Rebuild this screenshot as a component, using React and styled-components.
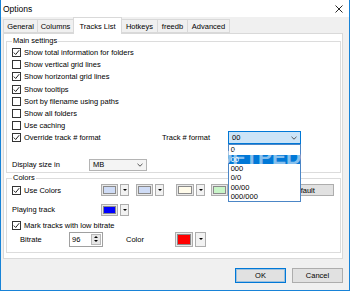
import React from "react";
import styled, { createGlobalStyle } from "styled-components";

const GlobalStyle = createGlobalStyle`
  html, body {
    margin: 0;
    padding: 0;
    background: #fff;
  }
  body {
    font-family: "Liberation Sans", Arial, sans-serif;
    font-size: 7.5px;
    color: #000;
  }
`;

const Window = styled.div`
  position: relative;
  width: 350px;
  height: 291px;
  box-sizing: border-box;
  border: 1px solid #1883d7;
  border-top: none;
  display: flex;
  flex-direction: column;
  background: #f0f0f0;
  overflow: hidden;
`;

const TitleBar = styled.div`
  flex: 0 0 17px;
  background: #fff;
  display: flex;
  align-items: center;
  justify-content: space-between;
  padding: 0 6px 0 2px;
  font-size: 8.5px;
`;

const TabStrip = styled.div`
  flex: 0 0 16px;
  display: flex;
  align-items: flex-end;
  padding-left: 2px;
`;

const Tab = styled.div`
  position: relative;
  box-sizing: border-box;
  width: ${(p) => p.$w}px;
  height: ${(p) => (p.$active ? 17 : 14)}px;
  margin-left: ${(p) => (p.$first ? 0 : -1)}px;
  margin-bottom: ${(p) => (p.$active ? -1 : 0)}px;
  z-index: ${(p) => (p.$active ? 2 : 1)};
  border: 1px solid #d9d9d9;
  border-bottom: ${(p) => (p.$active ? "none" : "1px solid #d9d9d9")};
  background: ${(p) => (p.$active ? "#fff" : "#f0f0f0")};
  display: flex;
  align-items: center;
  justify-content: center;
`;

const Page = styled.div`
  margin: 0 6px 0 2px;
  border: 1px solid #d9d9d9;
  background: #fff;
  padding: 2px 1px 5.5px 2px;
`;

const Group = styled.fieldset`
  margin: 0;
  min-width: 0;
  border: 1px solid #dcdcdc;
  padding: 0.5px 0 ${(p) => p.$pb}px 5px;
`;

const Legend = styled.legend`
  margin-left: 0;
  padding: 0 1px;
  line-height: 10px;
  font-size: 7.5px;
`;

const Row = styled.div`
  display: flex;
  align-items: center;
  height: ${(p) => p.$h || 12.2}px;
  margin-top: ${(p) => p.$mt || 0}px;
  padding-left: ${(p) => p.$pl || 0}px;
  padding-right: ${(p) => p.$pr || 0}px;
`;

const CheckItem = styled.label`
  flex: none;
  display: flex;
  align-items: center;
  gap: 3px;
  width: ${(p) => (p.$w ? `${p.$w}px` : "auto")};
`;

const Box = styled.span`
  flex: none;
  width: 9px;
  height: 9px;
  box-sizing: border-box;
  border: 1px solid #333;
  background: #fff;
  display: flex;
`;

const Text = styled.span`
  flex: none;
  width: ${(p) => (p.$w ? `${p.$w}px` : "auto")};
  margin-left: ${(p) => p.$ml || 0}px;
  white-space: nowrap;
`;

const ComboWrap = styled.div`
  position: relative;
  flex: none;
`;

const Combo = styled.div`
  box-sizing: border-box;
  width: ${(p) => p.$w}px;
  height: ${(p) => p.$h}px;
  border: 1px solid ${(p) => (p.$open ? "#0078d7" : "#b4b4b4")};
  background: ${(p) => (p.$open ? "#cce4f7" : "#f4f4f4")};
  display: flex;
  align-items: center;
  justify-content: space-between;
  padding: 0 3px;
`;

const DropList = styled.div`
  position: absolute;
  top: 100%;
  left: 0;
  width: 100%;
  box-sizing: border-box;
  border: 1px solid #4c86c6;
  background: #fff;
  padding: 0;
  z-index: 5;
`;

const Option = styled.div`
  height: 9.3px;
  line-height: 9.3px;
  padding-left: 1.7px;
  background: ${(p) => (p.$sel ? "#0078d7" : "transparent")};
  color: ${(p) => (p.$sel ? "#fff" : "#000")};
`;

const Picker = styled.div`
  flex: none;
  display: flex;
  gap: 2px;
  margin-left: ${(p) => p.$ml || 0}px;
`;

const SwatchBtn = styled.span`
  box-sizing: border-box;
  width: ${(p) => p.$w}px;
  height: ${(p) => p.$h}px;
  border: 1px solid #adadad;
  background: #e8e8e8;
  padding: 1px;
  display: flex;
`;

const Swatch = styled.span`
  flex: 1;
  box-sizing: border-box;
  border: 1px solid #8a8a8a;
  background: ${(p) => p.$c};
`;

const ArrowBtn = styled.span`
  box-sizing: border-box;
  width: ${(p) => p.$w}px;
  height: ${(p) => p.$h}px;
  border: 1px solid #adadad;
  background: #f2f2f2;
  display: flex;
  align-items: center;
  justify-content: center;
`;

const Tri = styled.span`
  width: 0;
  height: 0;
  border-left: 2px solid transparent;
  border-right: 2px solid transparent;
  border-${(p) => (p.$up ? "bottom" : "top")}: 2px solid #000;
`;

const Button = styled.div`
  flex: none;
  box-sizing: border-box;
  width: ${(p) => p.$w}px;
  height: ${(p) => p.$h}px;
  margin-left: ${(p) => (p.$auto ? "auto" : "0")};
  border: 1px solid ${(p) => (p.$default ? "#0078d7" : "#adadad")};
  box-shadow: ${(p) => (p.$default ? "inset 0 0 0 1px rgba(0,120,215,0.3)" : "none")};
  background: #e1e1e1;
  display: flex;
  align-items: center;
  justify-content: center;
`;

const Spin = styled.div`
  flex: none;
  box-sizing: border-box;
  width: 34px;
  height: 15px;
  border: 1px solid #a0a0a0;
  background: #fff;
  display: flex;
  align-items: center;
  justify-content: space-between;
  padding: 0 1px 0 2px;
`;

const SpinBtns = styled.span`
  box-sizing: border-box;
  width: 10px;
  height: 11px;
  border: 1px solid #b8b8b8;
  background: #e6e6e6;
  display: flex;
  flex-direction: column;
  align-items: center;
  justify-content: center;
  gap: 1.5px;
`;

const Footer = styled.div`
  flex: 1;
  display: flex;
  justify-content: flex-end;
  align-items: flex-start;
  gap: 6px;
  padding: 9px 6px 0 0;
`;

const Watermark = styled.div`
  position: absolute;
  left: 201px;
  top: 145px;
  font-size: 21px;
  font-weight: bold;
  color: rgba(255, 255, 255, 0.55);
  pointer-events: none;
  z-index: 10;
  white-space: nowrap;
`;

const Chevron = () => (
  <svg width="6" height="4" viewBox="0 0 6 4">
    <polyline points="0.5,0.8 3,3.2 5.5,0.8" fill="none" stroke="#444" strokeWidth="0.9" />
  </svg>
);

const Check = ({ on, label, w }) => (
  <CheckItem $w={w}>
    <Box>
      {on && (
        <svg width="7" height="7" viewBox="0 0 7 7">
          <polyline points="0.8,3.6 2.7,5.5 6.2,1.2" fill="none" stroke="#222" strokeWidth="1" />
        </svg>
      )}
    </Box>
    <Text>{label}</Text>
  </CheckItem>
);

const ColorPicker = ({ color, ml, w = 17, aw = 9, h = 12 }) => (
  <Picker $ml={ml}>
    <SwatchBtn $w={w} $h={h}>
      <Swatch $c={color} />
    </SwatchBtn>
    <ArrowBtn $w={aw} $h={h}>
      <Tri />
    </ArrowBtn>
  </Picker>
);

const tabs = [
  { label: "General", w: 35 },
  { label: "Columns", w: 37 },
  { label: "Tracks List", w: 49, active: true },
  { label: "Hotkeys", w: 37 },
  { label: "freedb", w: 31 },
  { label: "Advanced", w: 43 },
];

const mainChecks = [
  { label: "Show total information for folders", on: true },
  { label: "Show vertical grid lines", on: false },
  { label: "Show horizontal grid lines", on: true },
  { label: "Show tooltips", on: true },
  { label: "Sort by filename using paths", on: false },
  { label: "Show all folders", on: false },
  { label: "Use caching", on: false },
];

const formats = ["0", "00", "000", "0/0", "00/00", "000/000"];

export default function App() {
  return (
    <>
      <GlobalStyle />
      <Window>
        <TitleBar>
          <span>Options</span>
          <svg width="8" height="8" viewBox="0 0 8 8">
            <path d="M0.5 0.5 L7.5 7.5 M7.5 0.5 L0.5 7.5" stroke="#111" strokeWidth="0.9" />
          </svg>
        </TitleBar>
        <TabStrip>
          {tabs.map((t, i) => (
            <Tab key={t.label} $w={t.w} $active={t.active} $first={i === 0}>
              {t.label}
            </Tab>
          ))}
        </TabStrip>
        <Page>
          <Group $pb={1}>
            <Legend>Main settings</Legend>
            {mainChecks.map((c) => (
              <Row key={c.label}>
                <Check on={c.on} label={c.label} />
              </Row>
            ))}
            <Row>
              <Check on label="Override track # format" w={150} />
              <Text $w={66}>Track # format</Text>
              <ComboWrap>
                <Combo $w={73} $h={13} $open>
                  <span>00</span>
                  <Chevron />
                </Combo>
                <DropList>
                  {formats.map((f) => (
                    <Option key={f} $sel={f === "00"}>
                      {f}
                    </Option>
                  ))}
                </DropList>
              </ComboWrap>
            </Row>
            <Row $mt={14.5} $h={12.5}>
              <Text $w={77}>Display size in</Text>
              <Combo $w={58} $h={12.5}>
                <span>MB</span>
                <Chevron />
              </Combo>
            </Row>
          </Group>
          <Group $pb={5}>
            <Legend>Colors</Legend>
            <Row $h={13} $pr={6}>
              <Check on label="Use Colors" w={89} />
              <ColorPicker color="#cfdcf6" />
              <ColorPicker color="#cfdcf6" ml={7} />
              <ColorPicker color="#fffbea" ml={12} w={18} />
              <ColorPicker color="#c8f5c8" ml={6} />
              <Button $w={62} $h={12} $auto>
                Default
              </Button>
            </Row>
            <Row $h={12.5} $mt={7}>
              <Text $w={89}>Playing track</Text>
              <ColorPicker color="#0000ff" />
            </Row>
            <Row $mt={3.5}>
              <Check on label="Mark tracks with low bitrate" />
            </Row>
            <Row $h={15} $pl={8}>
              <Text $w={49}>Bitrate</Text>
              <Spin>
                <span>96</span>
                <SpinBtns>
                  <Tri $up />
                  <Tri />
                </SpinBtns>
              </Spin>
              <Text $w={49} $ml={23}>
                Color
              </Text>
              <ColorPicker color="#ff0000" w={18} aw={11} h={15} />
            </Row>
          </Group>
        </Page>
        <Footer>
          <Button $w={51} $h={15} $default>
            OK
          </Button>
          <Button $w={51} $h={15}>
            Cancel
          </Button>
        </Footer>
        <Watermark>SOFTPEDIA</Watermark>
      </Window>
    </>
  );
}
